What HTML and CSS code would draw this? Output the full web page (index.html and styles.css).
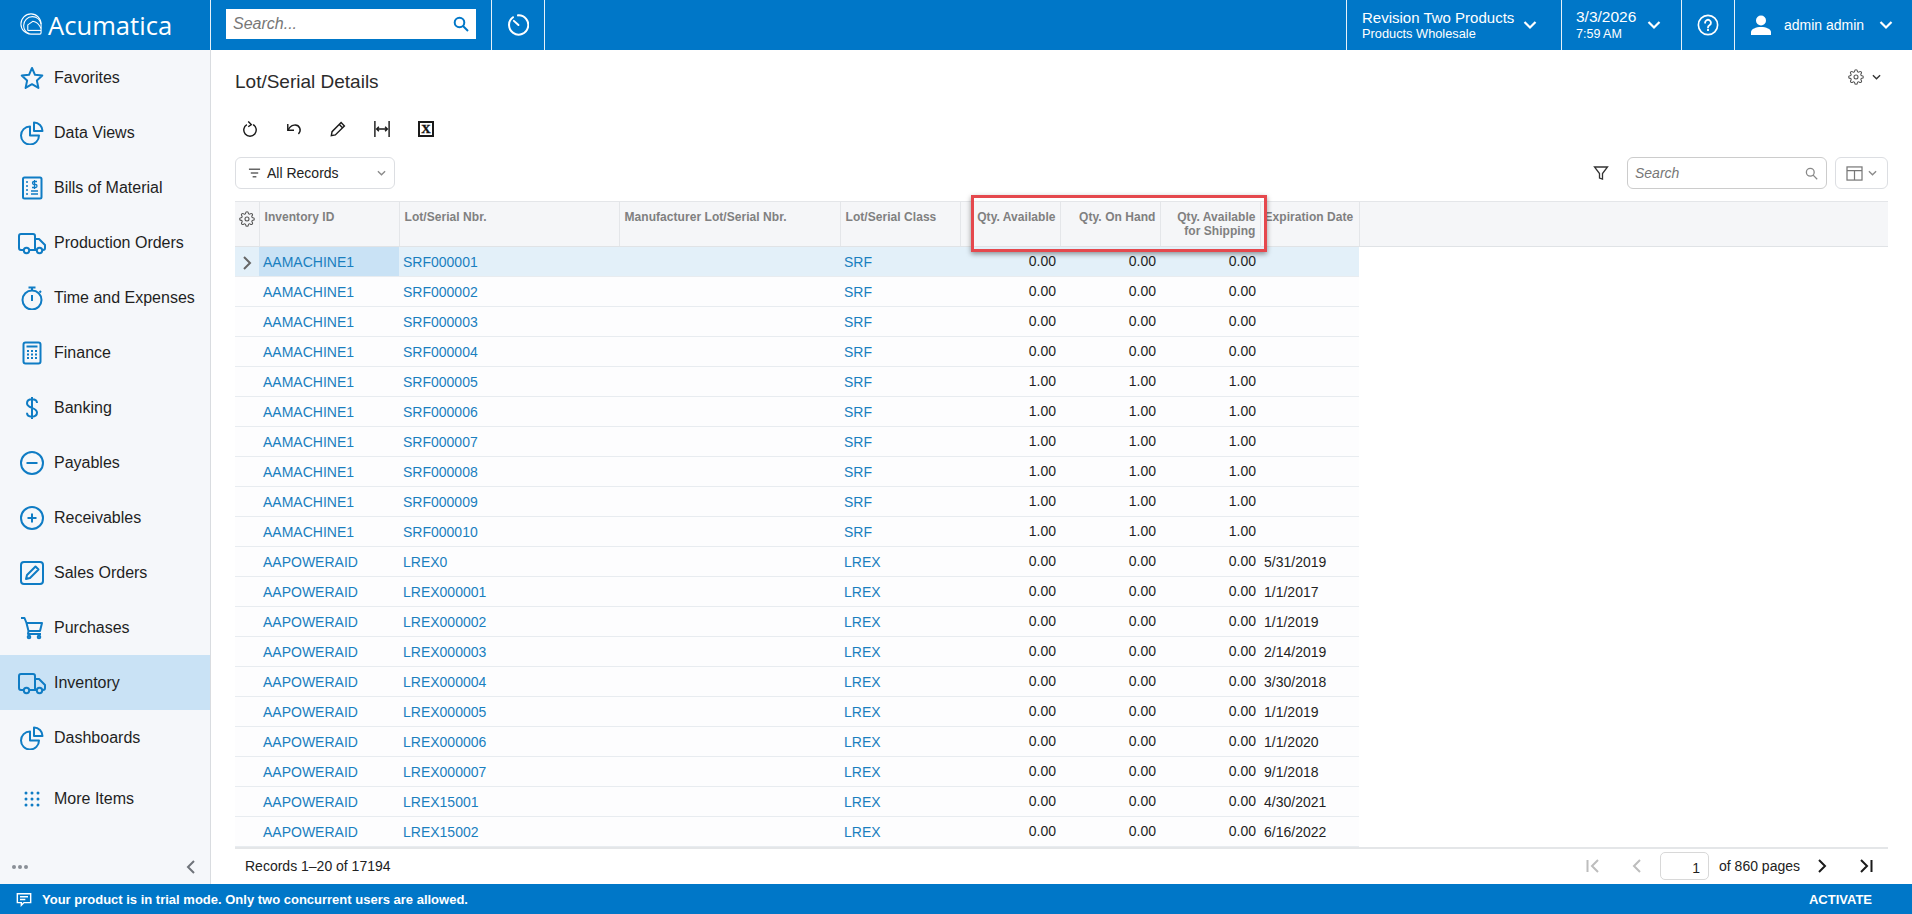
FILE: index.html
```html
<!DOCTYPE html>
<html lang="en">
<head>
<meta charset="utf-8">
<title>Lot/Serial Details</title>
<link rel="stylesheet" href="styles.css">
</head>
<body>
<div class="app">
  <header class="topbar">
    <div class="brand">
      <svg class="logo" viewBox="0 0 24 24" fill="none" stroke="#fff" stroke-width="1.200"><path d="M23 12v9.500a1.500 1.500 0 0 1-1.500 1.500H12A11 11 0 1 1 23 12z"/><path d="M23 12C22 7 18 4 13.500 4 8 4 4 8.500 4 13.500c0 4 2.500 7.500 6 9"/><path d="M8.500 19v-6L14 9c3.500.5 7 3.500 9 8"/><path d="M8.500 19H23"/></svg>
      <span class="brand-name">Acumatica</span>
    </div>
    <div class="top-search">
      <div class="top-search-box"><span>Search...</span>
        <svg viewBox="0 0 16 16" fill="none" stroke="#0077c8" stroke-width="2"><circle cx="6.500" cy="6.500" r="4.800"/><path d="M10 10l5 5"/></svg>
      </div>
    </div>
    <div class="top-history">
      <svg viewBox="0 0 24 24" fill="none" stroke="#fff" stroke-width="2.200" stroke-linecap="round"><path d="M6.500 3.500A10.500 10.500 0 1 0 12 1.500"/><path d="M7.500 7.500l5 4.500"/></svg>
    </div>
    <div class="spacer"></div>
    <div class="top-cell company">
      <div class="stack"><span class="line1">Revision Two Products</span><span class="line2">Products Wholesale</span></div>
      <svg class="chev" viewBox="0 0 14 10"><path d="M1.500 2l5.500 5.500L12.500 2"/></svg>
    </div>
    <div class="top-cell date">
      <div class="stack"><span class="line1">3/3/2026</span><span class="line2">7:59 AM</span></div>
      <svg class="chev" viewBox="0 0 14 10"><path d="M1.500 2l5.500 5.500L12.500 2"/></svg>
    </div>
    <div class="top-cell help">
      <svg viewBox="0 0 24 24" fill="none" stroke="#fff" stroke-width="1.800"><circle cx="12" cy="12" r="10.500"/><path d="M8.800 9.500a3.200 3.200 0 1 1 4.800 2.800c-1 .6-1.600 1.200-1.600 2.500" stroke-linecap="round" stroke-width="2"/><path d="M12 16.300v2.200" stroke-width="2"/></svg>
    </div>
    <div class="top-cell user">
      <svg class="user-icon" viewBox="0 0 20 20" fill="#fff"><circle cx="10" cy="5.500" r="5"/><path d="M0 20v-3C0 14 5 12 10 12s10 2 10 5v3z"/></svg>
      <span class="user-name">admin admin</span>
      <svg class="chev" viewBox="0 0 14 10"><path d="M1.500 2l5.500 5.500L12.500 2"/></svg>
    </div>
  </header>

  <div class="middle">
    <nav class="sidebar">
      <ul class="menu">
        <li class="item"><svg class="ico" viewBox="0 0 24 24"><path d="M12 2l3 6.800 7.300.8-5.400 5 1.500 7.300L12 18.200l-6.400 3.700 1.500-7.300-5.400-5 7.300-.8z"/></svg><span>Favorites</span></li>
        <li class="item"><svg class="ico" viewBox="0 0 24 24"><path d="M10 5.500a9 9 0 1 0 9 9h-9z"/><path d="M14 1.500a8.500 8.500 0 0 1 8.500 8.500H14z"/></svg><span>Data Views</span></li>
        <li class="item"><svg class="ico" viewBox="0 0 24 24"><rect x="3" y="1.500" width="18.500" height="21" rx="1.500"/><path d="M6 6h2M6 10h2M6 14h2M6 18h2M11 18h7M11 15h7" stroke-width="1.500"/><path d="M17 5.500h-3a1.500 1.500 0 0 0 0 3h1.500a1.500 1.500 0 0 1 0 3H12M14.500 4v9" stroke-width="1.300"/></svg><span>Bills of Material</span></li>
        <li class="item"><svg class="ico wide" viewBox="0 0 28 24"><path d="M6 19H3a2 2 0 0 1-2-2V5a2 2 0 0 1 2-2h12a2 2 0 0 1 2 2v14h-6"/><path d="M17 8h4l6 6v3a2 2 0 0 1-2 2h-1M19 19h-2"/><circle cx="8.500" cy="19.500" r="2.700"/><circle cx="21.500" cy="19.500" r="2.700"/></svg><span>Production Orders</span></li>
        <li class="item"><svg class="ico" viewBox="0 0 24 24"><circle cx="12" cy="14" r="9.500"/><path d="M8.500 1.500h7M12 1.500v3M12 9v6M19.500 5l1.500 1.500"/></svg><span>Time and Expenses</span></li>
        <li class="item"><svg class="ico" viewBox="0 0 24 24"><rect x="3.500" y="1.500" width="17" height="21" rx="2"/><path d="M6.500 5.500h11" stroke-width="2"/><path d="M7 10h2M11 10h2M15 10h2M7 13.500h2M11 13.500h2M15 13.500h2M7 17h2M11 17h2M15 17h2" stroke-width="2"/></svg><span>Finance</span></li>
        <li class="item"><svg class="ico" viewBox="0 0 24 24"><path d="M17 7c0-2.500-2-3.800-5-3.800S7 4.700 7 7.300c0 5.500 10 3.700 10 9.300 0 2.700-2.200 4.100-5 4.100s-5-1.400-5-3.900M12 1v22"/></svg><span>Banking</span></li>
        <li class="item"><svg class="ico" viewBox="0 0 24 24"><circle cx="12" cy="12" r="11"/><path d="M6.500 12h11"/></svg><span>Payables</span></li>
        <li class="item"><svg class="ico" viewBox="0 0 24 24"><circle cx="12" cy="12" r="11"/><path d="M7.500 12h9M12 7.500v9"/></svg><span>Receivables</span></li>
        <li class="item"><svg class="ico" viewBox="0 0 24 24"><rect x="1" y="1" width="22" height="22" rx="3"/><path d="M6 18l1-4 8.500-8.500 3 3L10 17z"/></svg><span>Sales Orders</span></li>
        <li class="item"><svg class="ico" viewBox="0 0 24 24"><path d="M1 2h3.500l2 5m0 0H22l-2 8H8.500zM8.500 15l-.5 3h13"/><circle cx="9" cy="21" r="1.300"/><circle cx="19" cy="21" r="1.300"/></svg><span>Purchases</span></li>
        <li class="item active"><svg class="ico wide" viewBox="0 0 28 24"><path d="M6 19H3a2 2 0 0 1-2-2V5a2 2 0 0 1 2-2h12a2 2 0 0 1 2 2v14h-6"/><path d="M17 8h4l6 6v3a2 2 0 0 1-2 2h-1M19 19h-2"/><circle cx="8.500" cy="19.500" r="2.700"/><circle cx="21.500" cy="19.500" r="2.700"/></svg><span>Inventory</span></li>
        <li class="item"><svg class="ico" viewBox="0 0 24 24"><path d="M10 5.500a9 9 0 1 0 9 9h-9z"/><path d="M14 1.500a8.500 8.500 0 0 1 8.500 8.500H14z"/></svg><span>Dashboards</span></li>
        <li class="item more"><svg class="ico dots" viewBox="0 0 24 24"><circle cx="4" cy="4" r="2"/><circle cx="12" cy="4" r="2"/><circle cx="20" cy="4" r="2"/><circle cx="4" cy="12" r="2"/><circle cx="12" cy="12" r="2"/><circle cx="20" cy="12" r="2"/><circle cx="4" cy="20" r="2"/><circle cx="12" cy="20" r="2"/><circle cx="20" cy="20" r="2"/></svg><span>More Items</span></li>
      </ul>
      <div class="side-foot">
        <span class="ellipsis"><i></i><i></i><i></i></span>
        <svg class="collapse" viewBox="0 0 10 16"><path d="M8 2L2 8l6 6"/></svg>
      </div>
    </nav>

    <main class="content">
      <div class="title-row">
        <h1>Lot/Serial Details</h1>
        <div class="page-settings">
          <svg class="gear" viewBox="0 0 24 24"><circle cx="12" cy="12" r="3"/><path d="M19.400 15a1.650 1.650 0 0 0 .33 1.820l.06.06a2 2 0 0 1 0 2.830 2 2 0 0 1-2.830 0l-.06-.06a1.650 1.650 0 0 0-1.820-.33 1.650 1.650 0 0 0-1 1.510V21a2 2 0 0 1-2 2 2 2 0 0 1-2-2v-.09A1.650 1.650 0 0 0 9 19.400a1.650 1.650 0 0 0-1.820.33l-.06.06a2 2 0 0 1-2.830 0 2 2 0 0 1 0-2.830l.06-.06a1.650 1.650 0 0 0 .33-1.820 1.650 1.650 0 0 0-1.510-1H3a2 2 0 0 1-2-2 2 2 0 0 1 2-2h.09A1.650 1.650 0 0 0 4.600 9a1.650 1.650 0 0 0-.33-1.820l-.06-.06a2 2 0 0 1 0-2.830 2 2 0 0 1 2.830 0l.06.06a1.650 1.650 0 0 0 1.820.33H9a1.650 1.650 0 0 0 1-1.510V3a2 2 0 0 1 2-2 2 2 0 0 1 2 2v.09a1.650 1.650 0 0 0 1 1.510 1.650 1.650 0 0 0 1.820-.33l.06-.06a2 2 0 0 1 2.830 0 2 2 0 0 1 0 2.830l-.06.06a1.650 1.650 0 0 0-.33 1.820V9a1.650 1.650 0 0 0 1.510 1H21a2 2 0 0 1 2 2 2 2 0 0 1-2 2h-.09a1.650 1.650 0 0 0-1.510 1z"/></svg>
          <svg class="mini-chev" viewBox="0 0 10 6"><path d="M1 1l4 4 4-4"/></svg>
        </div>
      </div>

      <div class="toolbar">
        <svg class="tool" viewBox="0 0 18 18"><path d="M5.500 4a7 7 0 1 0 7 0"/><path d="M7 .5L10.500 4 7 6.500" /></svg>
        <svg class="tool" viewBox="0 0 18 18"><path d="M2 3.500v7h7"/><path d="M2.500 10C5 4 13 2.500 15.500 8c1 2.500 0 5-1.500 6.500"/></svg>
        <svg class="tool" viewBox="0 0 18 18"><path d="M1.500 16.500l.8-4.500L12.500 1.800l3.700 3.700L6 15.700zM10.500 4l3.500 3.500"/></svg>
        <svg class="tool" viewBox="0 0 18 18"><path d="M1 0v18M17 0v18M3 9h12M5.500 6.500L3 9l2.500 2.500M12.500 6.500L15 9l-2.500 2.500"/></svg>
        <span class="excel">X</span>
      </div>

      <div class="filter-row">
        <div class="records-select">
          <svg class="lines" viewBox="0 0 14 12"><path d="M1 2h12M3 6h8M5 10h4"/></svg>
          <span>All Records</span>
          <svg class="mini-chev grey" viewBox="0 0 10 6"><path d="M1 1l4 4 4-4"/></svg>
        </div>
        <div class="spacer"></div>
        <svg class="funnel" viewBox="0 0 16 16"><path d="M1.500 2h13L9.500 8.500V14l-3-1V8.500z"/></svg>
        <div class="grid-search"><span>Search</span>
          <svg viewBox="0 0 16 16"><circle cx="6.500" cy="6.500" r="4.800"/><path d="M10 10l5 5"/></svg>
        </div>
        <div class="columns-btn">
          <svg class="cols" viewBox="0 0 18 16"><rect x="1" y="1" width="16" height="14"/><path d="M1 5h16M9 5v10"/></svg>
          <svg class="mini-chev grey" viewBox="0 0 10 6"><path d="M1 1l4 4 4-4"/></svg>
        </div>
      </div>

      <div class="grid-wrap">
        <table class="grid">
          <colgroup><col class="c-a"><col class="c-b"><col class="c-c"><col class="c-d"><col class="c-e"><col class="c-f"><col class="c-g"><col class="c-h"><col class="c-i"><col></colgroup>
          <thead>
            <tr>
              <th class="gear-head"><svg class="gear" viewBox="0 0 24 24"><circle cx="12" cy="12" r="3"/><path d="M19.400 15a1.650 1.650 0 0 0 .33 1.820l.06.06a2 2 0 0 1 0 2.830 2 2 0 0 1-2.830 0l-.06-.06a1.650 1.650 0 0 0-1.820-.33 1.650 1.650 0 0 0-1 1.510V21a2 2 0 0 1-2 2 2 2 0 0 1-2-2v-.09A1.650 1.650 0 0 0 9 19.400a1.650 1.650 0 0 0-1.820.33l-.06.06a2 2 0 0 1-2.830 0 2 2 0 0 1 0-2.830l.06-.06a1.650 1.650 0 0 0 .33-1.820 1.650 1.650 0 0 0-1.510-1H3a2 2 0 0 1-2-2 2 2 0 0 1 2-2h.09A1.650 1.650 0 0 0 4.600 9a1.650 1.650 0 0 0-.33-1.820l-.06-.06a2 2 0 0 1 0-2.830 2 2 0 0 1 2.830 0l.06.06a1.650 1.650 0 0 0 1.820.33H9a1.650 1.650 0 0 0 1-1.510V3a2 2 0 0 1 2-2 2 2 0 0 1 2 2v.09a1.650 1.650 0 0 0 1 1.510 1.650 1.650 0 0 0 1.820-.33l.06-.06a2 2 0 0 1 2.830 0 2 2 0 0 1 0 2.830l-.06.06a1.650 1.650 0 0 0-.33 1.820V9a1.650 1.650 0 0 0 1.510 1H21a2 2 0 0 1 2 2 2 2 0 0 1-2 2h-.09a1.650 1.650 0 0 0-1.510 1z"/></svg></th>
              <th>Inventory ID</th><th>Lot/Serial Nbr.</th><th>Manufacturer Lot/Serial Nbr.</th><th>Lot/Serial Class</th>
              <th class="num">Qty. Available</th><th class="num">Qty. On Hand</th><th class="num">Qty. Available<br>for Shipping</th><th class="exp">Expiration Date</th><th class="last"></th>
            </tr>
          </thead>
          <tbody>
            <tr class="current"><td class="mark"><svg viewBox="0 0 10 16"><path d="M2 2l6 6-6 6"/></svg></td><td class="link focus">AAMACHINE1</td><td class="link">SRF000001</td><td></td><td class="link">SRF</td><td class="num">0.00</td><td class="num">0.00</td><td class="num">0.00</td><td></td><td class="last"></td></tr>
            <tr><td></td><td class="link">AAMACHINE1</td><td class="link">SRF000002</td><td></td><td class="link">SRF</td><td class="num">0.00</td><td class="num">0.00</td><td class="num">0.00</td><td></td><td class="last"></td></tr>
            <tr><td></td><td class="link">AAMACHINE1</td><td class="link">SRF000003</td><td></td><td class="link">SRF</td><td class="num">0.00</td><td class="num">0.00</td><td class="num">0.00</td><td></td><td class="last"></td></tr>
            <tr><td></td><td class="link">AAMACHINE1</td><td class="link">SRF000004</td><td></td><td class="link">SRF</td><td class="num">0.00</td><td class="num">0.00</td><td class="num">0.00</td><td></td><td class="last"></td></tr>
            <tr><td></td><td class="link">AAMACHINE1</td><td class="link">SRF000005</td><td></td><td class="link">SRF</td><td class="num">1.00</td><td class="num">1.00</td><td class="num">1.00</td><td></td><td class="last"></td></tr>
            <tr><td></td><td class="link">AAMACHINE1</td><td class="link">SRF000006</td><td></td><td class="link">SRF</td><td class="num">1.00</td><td class="num">1.00</td><td class="num">1.00</td><td></td><td class="last"></td></tr>
            <tr><td></td><td class="link">AAMACHINE1</td><td class="link">SRF000007</td><td></td><td class="link">SRF</td><td class="num">1.00</td><td class="num">1.00</td><td class="num">1.00</td><td></td><td class="last"></td></tr>
            <tr><td></td><td class="link">AAMACHINE1</td><td class="link">SRF000008</td><td></td><td class="link">SRF</td><td class="num">1.00</td><td class="num">1.00</td><td class="num">1.00</td><td></td><td class="last"></td></tr>
            <tr><td></td><td class="link">AAMACHINE1</td><td class="link">SRF000009</td><td></td><td class="link">SRF</td><td class="num">1.00</td><td class="num">1.00</td><td class="num">1.00</td><td></td><td class="last"></td></tr>
            <tr><td></td><td class="link">AAMACHINE1</td><td class="link">SRF000010</td><td></td><td class="link">SRF</td><td class="num">1.00</td><td class="num">1.00</td><td class="num">1.00</td><td></td><td class="last"></td></tr>
            <tr><td></td><td class="link">AAPOWERAID</td><td class="link">LREX0</td><td></td><td class="link">LREX</td><td class="num">0.00</td><td class="num">0.00</td><td class="num">0.00</td><td>5/31/2019</td><td class="last"></td></tr>
            <tr><td></td><td class="link">AAPOWERAID</td><td class="link">LREX000001</td><td></td><td class="link">LREX</td><td class="num">0.00</td><td class="num">0.00</td><td class="num">0.00</td><td>1/1/2017</td><td class="last"></td></tr>
            <tr><td></td><td class="link">AAPOWERAID</td><td class="link">LREX000002</td><td></td><td class="link">LREX</td><td class="num">0.00</td><td class="num">0.00</td><td class="num">0.00</td><td>1/1/2019</td><td class="last"></td></tr>
            <tr><td></td><td class="link">AAPOWERAID</td><td class="link">LREX000003</td><td></td><td class="link">LREX</td><td class="num">0.00</td><td class="num">0.00</td><td class="num">0.00</td><td>2/14/2019</td><td class="last"></td></tr>
            <tr><td></td><td class="link">AAPOWERAID</td><td class="link">LREX000004</td><td></td><td class="link">LREX</td><td class="num">0.00</td><td class="num">0.00</td><td class="num">0.00</td><td>3/30/2018</td><td class="last"></td></tr>
            <tr><td></td><td class="link">AAPOWERAID</td><td class="link">LREX000005</td><td></td><td class="link">LREX</td><td class="num">0.00</td><td class="num">0.00</td><td class="num">0.00</td><td>1/1/2019</td><td class="last"></td></tr>
            <tr><td></td><td class="link">AAPOWERAID</td><td class="link">LREX000006</td><td></td><td class="link">LREX</td><td class="num">0.00</td><td class="num">0.00</td><td class="num">0.00</td><td>1/1/2020</td><td class="last"></td></tr>
            <tr><td></td><td class="link">AAPOWERAID</td><td class="link">LREX000007</td><td></td><td class="link">LREX</td><td class="num">0.00</td><td class="num">0.00</td><td class="num">0.00</td><td>9/1/2018</td><td class="last"></td></tr>
            <tr><td></td><td class="link">AAPOWERAID</td><td class="link">LREX15001</td><td></td><td class="link">LREX</td><td class="num">0.00</td><td class="num">0.00</td><td class="num">0.00</td><td>4/30/2021</td><td class="last"></td></tr>
            <tr><td></td><td class="link">AAPOWERAID</td><td class="link">LREX15002</td><td></td><td class="link">LREX</td><td class="num">0.00</td><td class="num">0.00</td><td class="num">0.00</td><td>6/16/2022</td><td class="last"></td></tr>
          </tbody>
        </table>
        <div class="highlight"></div>
      </div>

      <div class="pager">
        <span class="records">Records 1–20 of 17194</span>
        <div class="spacer"></div>
        <svg class="pg off first" viewBox="0 0 14 16"><path d="M1.500 2v12M12 2L6 8l6 6"/></svg>
        <svg class="pg off prev" viewBox="0 0 10 16"><path d="M8 2L2 8l6 6"/></svg>
        <div class="page-box">1</div>
        <span class="of">of 860 pages</span>
        <svg class="pg next" viewBox="0 0 10 16"><path d="M2 2l6 6-6 6"/></svg>
        <svg class="pg lastp" viewBox="0 0 14 16"><path d="M2 2l6 6-6 6M12.500 2v12"/></svg>
      </div>
    </main>
  </div>

  <footer class="trial">
    <svg viewBox="0 0 18 16"><path d="M1.500 1.500h15v10H9l-3 3v-3H1.500z"/><path d="M4.500 5h9M4.500 8h6"/></svg>
    <span class="trial-msg">Your product is in trial mode. Only two concurrent users are allowed.</span>
    <span class="activate">ACTIVATE</span>
  </footer>
</div>
</body>
</html>
```
FILE: styles.css
```css
* { box-sizing: border-box; }
html, body { margin: 0; height: 100%; }
body { font-family: "Liberation Sans", Arial, sans-serif; font-size: 14px; color: #1f1f1f; background: #fff; overflow: hidden; }
.app { height: 914px; display: flex; flex-direction: column; }
.spacer { flex: 1; }

/* top bar */
.topbar { height: 50px; flex: none; background: #0077c8; color: #fff; display: flex; }
.brand { width: 211px; flex: none; display: flex; align-items: center; padding: 0 0 0 20px; border-right: 1px solid #e6f1f9; }
.logo { width: 22px; height: 22px; margin: -2px 6px 0 0; flex: none; }
.brand-name { font-family: "Open Sans", sans-serif; font-size: 25.6px; line-height: 28px; margin-top: 1px; }
.top-search { width: 281px; flex: none; padding: 9px 15px 0 15px; border-right: 1px solid #e6f1f9; }
.top-search-box { height: 30px; width: 250px; background: #fff; display: flex; align-items: center; justify-content: space-between; padding: 0 7px 0 7px; color: #777; font-style: italic; font-size: 16px; }
.top-search-box svg { width: 16px; height: 16px; }
.top-history { width: 53px; flex: none; display: flex; align-items: center; justify-content: center; border-right: 1px solid #e6f1f9; }
.top-history svg { width: 22px; height: 22px; }
.top-cell { display: flex; align-items: center; flex: none; border-left: 1px solid #e6f1f9; height: 50px; }
.stack { display: flex; flex-direction: column; }
.line1 { font-size: 15px; line-height: 17px; }
.line2 { font-size: 12.8px; line-height: 15px; }
.company { width: 215px; padding: 0 24px 0 15px; justify-content: space-between; }
.date { width: 120px; padding: 0 20px 0 14px; justify-content: space-between; }
.date .line1 { font-size: 15.5px; line-height: 19px; }
.date .line2 { font-size: 12.5px; line-height: 17px; }
.help { width: 53px; justify-content: center; }
.help svg { width: 22px; height: 22px; }
.user { width: 178px; padding-left: 16px; }
.user-icon { width: 20px; height: 20px; margin-right: 13px; flex: none; }
.user-name { font-size: 14px; margin-right: 15px; }
.chev { width: 14px; height: 10px; fill: none; stroke: #fff; stroke-width: 2.200; flex: none; }

/* sidebar */
.middle { flex: 1; display: flex; min-height: 0; }
.sidebar { width: 211px; flex: none; background: #f5f7fa; border-right: 1px solid #d9dce0; display: flex; flex-direction: column; }
.menu { list-style: none; margin: 0; padding: 0; flex: 1; }
.item { height: 55px; display: flex; align-items: center; padding-left: 20px; font-size: 16px; color: #1f1f1f; }
.item.active { background: #c9e2f5; }
.item.more { margin-top: 6px; }
.ico { width: 24px; height: 24px; margin-right: 10px; fill: none; stroke: #0f7cc4; stroke-width: 2; stroke-linejoin: round; flex: none; }
.ico.wide { width: 28px; margin-left: -2px; margin-right: 8px; }
.dots { fill: #0f7cc4; stroke: none; padding: 3px; }
.side-foot { height: 34px; display: flex; align-items: center; justify-content: space-between; padding: 0 14px 0 12px; }
.ellipsis { display: flex; gap: 2px; }
.ellipsis i { width: 4px; height: 4px; border-radius: 50%; background: #8a8f96; }
.collapse { width: 10px; height: 16px; fill: none; stroke: #6f747a; stroke-width: 2; }

/* content */
.content { flex: 1; min-width: 0; padding: 0 24px; display: flex; flex-direction: column; }
.title-row { height: 64px; flex: none; display: flex; align-items: center; justify-content: space-between; }
h1 { margin: 0; font-size: 19px; font-weight: 400; color: #2b2b2b; }
.page-settings { display: flex; align-items: center; gap: 8px; margin-top: -10px; padding-right: 7px; }
.gear { width: 16px; height: 16px; fill: none; stroke: #555; stroke-width: 1.600; display: block; }
.mini-chev { width: 9px; height: 6px; fill: none; stroke: #333; stroke-width: 1.500; flex: none; }
.mini-chev.grey { stroke: #8a8a8a; }
.toolbar { height: 30px; flex: none; display: flex; align-items: center; gap: 28px; padding-left: 7px; }
.tool { width: 16px; height: 16px; fill: none; stroke: #1a1a1a; stroke-width: 1.600; flex: none; }
.excel { width: 16px; height: 16px; flex: none; border: 2px solid #1a1a1a; font-family: "Liberation Serif", serif; font-weight: 700; font-size: 13px; line-height: 12px; text-align: center; color: #111; -webkit-text-stroke: .4px #111; }
.filter-row { height: 32px; flex: none; display: flex; align-items: center; margin-top: 13px; }
.records-select { width: 160px; height: 32px; border: 1px solid #dcdee2; border-radius: 6px; display: flex; align-items: center; padding: 0 8px 0 12px; background: #fff; }
.records-select span { flex: 1; font-size: 14px; color: #222; margin-left: 6px; }
.lines { width: 13px; height: 12px; fill: none; stroke: #666; stroke-width: 1.500; flex: none; }
.funnel { width: 16px; height: 16px; fill: none; stroke: #333; stroke-width: 1.300; margin-right: 18px; }
.grid-search { width: 200px; height: 32px; border: 1px solid #ccc; border-radius: 6px; display: flex; align-items: center; justify-content: space-between; padding: 0 8px 0 7px; color: #777; font-style: italic; font-size: 14px; }
.grid-search svg { width: 13px; height: 13px; fill: none; stroke: #888; stroke-width: 1.600; }
.columns-btn { width: 53px; height: 32px; margin-left: 8px; border: 1px solid #dcdee2; border-radius: 6px; display: flex; align-items: center; justify-content: center; gap: 5px; }
.cols { width: 17px; height: 15px; fill: none; stroke: #777; stroke-width: 1.300; }

/* grid */
.grid-wrap { position: relative; margin-top: 12px; flex: none; }
.grid { width: 1653px; table-layout: fixed; border-collapse: collapse; }
.c-a { width: 24px; } .c-b { width: 140px; } .c-c { width: 220px; } .c-d { width: 221px; }
.c-e { width: 120px; } .c-f { width: 100px; } .c-g { width: 100px; } .c-h { width: 100px; } .c-i { width: 99px; }
.grid thead tr { height: 45px; }
.grid th { background: #f5f6f8; border-top: 1px solid #e4e6e9; border-bottom: 1px solid #e0e3e6; border-right: 1px solid #e4e6e9; font-size: 12px; line-height: 14px; font-weight: 700; color: #808080; text-align: left; vertical-align: top; padding: 8px 4px 0 5px; white-space: nowrap; overflow: hidden; letter-spacing: .05px; }
.grid th.num { text-align: right; padding-right: 4px; }
.grid th.exp { padding-left: 4px; }
.grid th.last { border-right: 0; }
.grid th.gear-head { padding: 9px 0 0 4px; }
.grid tbody tr { height: 30px; }
.grid td { border-bottom: 1px solid #e8ecf0; font-size: 14px; line-height: 16px; padding: 0 4px; color: #1f1f1f; background: #fdfdfe; white-space: nowrap; }
.grid td.num { text-align: right; padding-bottom: 2px; }
.grid td.last { background: #fff; border-bottom: 0; }
.grid td.link { color: #1a7fbf; }
.grid .current td { background: #e3f0f9; }
.grid .current td.focus { background: #c9e2f5; }
.grid .current td.last { background: #fff; }
.grid td.mark { padding: 2px 0 0 7px; }
.mark svg { width: 10px; height: 16px; fill: none; stroke: #666; stroke-width: 2; display: block; }
.highlight { position: absolute; left: 736px; top: -6px; width: 296px; height: 57px; border: 3px solid #e5484d; box-shadow: 0 2px 5px rgba(0,0,0,.4); pointer-events: none; }

/* pager */
.pager { flex: 1; border-top: 2px solid #e4e6e8; display: flex; align-items: center; padding-bottom: 2px; }
.records { margin-left: 10px; font-size: 14px; color: #222; }
.pg { width: 10px; height: 16px; fill: none; stroke: #1a1a1a; stroke-width: 2; flex: none; }
.pg.first, .pg.lastp { width: 14px; }
.pg.off { stroke: #bdbdbd; }
.prev { margin-left: 32px; }
.page-box { width: 49px; height: 28px; margin-left: 18px; border: 1px solid #d8d8d8; border-radius: 5px; text-align: right; padding: 7px 8px 0 0; font-size: 14px; line-height: 16px; }
.of { margin-left: 10px; font-size: 14px; color: #222; }
.next { margin-left: 17px; }
.lastp { margin-left: 32px; margin-right: 15px; }

/* trial */
.trial { height: 30px; flex: none; background: #0077c8; color: #fff; display: flex; align-items: center; padding: 0 40px 0 16px; font-size: 13px; font-weight: 700; }
.trial svg { width: 16px; height: 15px; fill: none; stroke: #fff; stroke-width: 1.600; margin-right: 10px; }
.trial-msg { flex: 1; }
.activate { font-size: 13px; }
```
